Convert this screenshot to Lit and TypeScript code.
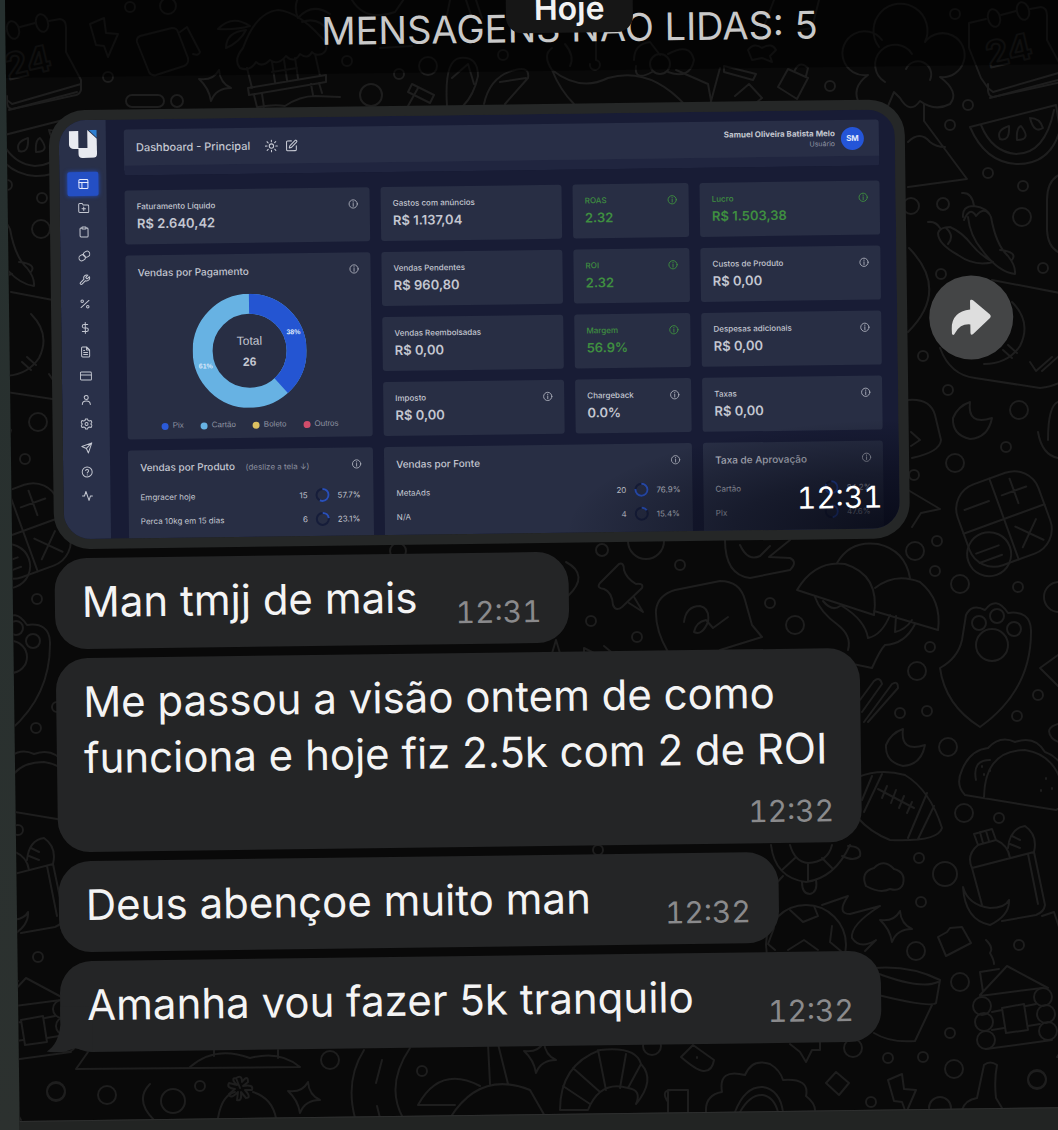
import { LitElement, html, css, svg } from 'lit';
import { customElement, property } from 'lit/decorators.js';
import { classMap } from 'lit/directives/class-map.js';

const strokeIcons: Record<string, unknown> = {
  layout: svg`<rect x="3" y="3" width="18" height="18" rx="2"/><path d="M3 9h18M9 9v12"/>`,
  folder: svg`<path d="M22 19a2 2 0 0 1-2 2H4a2 2 0 0 1-2-2V5a2 2 0 0 1 2-2h5l2 3h9a2 2 0 0 1 2 2zM12 10v7M8.500 13.500h7"/>`,
  clipboard: svg`<path d="M16 4h2a2 2 0 0 1 2 2v14a2 2 0 0 1-2 2H6a2 2 0 0 1-2-2V6a2 2 0 0 1 2-2h2"/><rect x="8" y="2" width="8" height="4" rx="1"/>`,
  link: svg`<rect x="1" y="10" width="13" height="11" rx="5.500" transform="rotate(-30 7.500 15.500)"/><rect x="10" y="3" width="13" height="11" rx="5.500" transform="rotate(-30 16.500 8.500)"/>`,
  wrench: svg`<path d="M14.700 6.300a1 1 0 0 0 0 1.400l1.600 1.600a1 1 0 0 0 1.400 0l3.800-3.800a6 6 0 0 1-7.900 7.900l-6.900 6.900a2.100 2.100 0 0 1-3-3l6.900-6.900a6 6 0 0 1 7.900-7.900z"/>`,
  percent: svg`<path d="M20 5L4 19"/><circle cx="6.500" cy="6.500" r="2.500"/><circle cx="17.500" cy="17.500" r="2.500"/>`,
  dollar: svg`<path d="M12 1v22M17 5H9.500a3.500 3.500 0 0 0 0 7h5a3.500 3.500 0 0 1 0 7H6"/>`,
  file: svg`<path d="M14 2H6a2 2 0 0 0-2 2v16a2 2 0 0 0 2 2h12a2 2 0 0 0 2-2V8zM14 2v6h6M16 13H8M16 17H8M10 9H8"/>`,
  card: svg`<rect x="1" y="4" width="22" height="16" rx="2"/><path d="M1 10h22"/>`,
  user: svg`<path d="M20 21c0-5-3-7-8-7s-8 2-8 7"/><circle cx="12" cy="7" r="4"/>`,
  settings: svg`<circle cx="12" cy="12" r="3"/><path d="M10 2h4l1 3 3 1 3-1 2 4-2 2v2l2 2-2 4-3-1-3 1-1 3h-4l-1-3-3-1-3 1-2-4 2-2v-2L1 9l2-4 3 1 3-1z"/>`,
  send: svg`<path d="M22 2L11 13M22 2l-7 20-4-9-9-4z"/>`,
  help: svg`<circle cx="12" cy="12" r="10"/><path d="M9 9a3 3 0 0 1 5.800 1c0 2-2.800 2.500-2.800 4M12 17.500v.5"/>`,
  activity: svg`<path d="M22 12h-4l-3 9L9 3l-3 9H2"/>`,
  info: svg`<circle cx="12" cy="12" r="9"/><path d="M12 11v6M12 7v1"/>`,
  sun: svg`<circle cx="12" cy="12" r="4"/><path d="M12 1v3M12 20v3M4 4l2 2M18 18l2 2M1 12h3M20 12h3M4 20l2-2M18 6l2-2"/>`,
  edit: svg`<path d="M12 3H5a2 2 0 0 0-2 2v14a2 2 0 0 0 2 2h14a2 2 0 0 0 2-2v-7"/><path d="M18.500 2.500a2.100 2.100 0 0 1 3 3L12 15l-4 1 1-4z"/>`,
};

const icon = (name: string) => html`
  <svg class="icon" viewBox="0 0 24 24" aria-hidden="true">${strokeIcons[name]}</svg>
`;

const navItems = [
  ['layout', 'Dashboard'],
  ['folder', 'Projetos'],
  ['clipboard', 'Relatórios'],
  ['link', 'Links'],
  ['wrench', 'Ferramentas'],
  ['percent', 'Taxas'],
  ['dollar', 'Despesas'],
  ['file', 'Documentos'],
  ['card', 'Assinatura'],
  ['user', 'Conta'],
  ['settings', 'Configurações'],
  ['send', 'Notificações'],
  ['help', 'Ajuda'],
  ['activity', 'Atividade'],
];

interface Metric {
  label: string;
  value: string;
  info?: boolean;
  good?: boolean;
}

// one array per grid row, first entry sits in the second column
const metricRows: Metric[][] = [
  [
    { label: 'Gastos com anúncios', value: 'R$ 1.137,04' },
    { label: 'ROAS', value: '2.32', info: true, good: true },
    { label: 'Lucro', value: 'R$ 1.503,38', info: true, good: true },
  ],
  [
    { label: 'Vendas Pendentes', value: 'R$ 960,80' },
    { label: 'ROI', value: '2.32', info: true, good: true },
    { label: 'Custos de Produto', value: 'R$ 0,00', info: true },
  ],
  [
    { label: 'Vendas Reembolsadas', value: 'R$ 0,00' },
    { label: 'Margem', value: '56.9%', info: true, good: true },
    { label: 'Despesas adicionais', value: 'R$ 0,00', info: true },
  ],
  [
    { label: 'Imposto', value: 'R$ 0,00', info: true },
    { label: 'Chargeback', value: '0.0%', info: true },
    { label: 'Taxas', value: 'R$ 0,00', info: true },
  ],
];

interface Share {
  name: string;
  count?: number;
  percent: number;
}

const products: Share[] = [
  { name: 'Emgracer hoje', count: 15, percent: 57.7 },
  { name: 'Perca 10kg em 15 dias', count: 6, percent: 23.1 },
];

const sources: Share[] = [
  { name: 'MetaAds', count: 20, percent: 76.9 },
  { name: 'N/A', count: 4, percent: 15.4 },
];

const approvals: Share[] = [
  { name: 'Cartão', percent: 84.2 },
  { name: 'Pix', percent: 47.6 },
];

@customElement('sales-dashboard')
export class SalesDashboard extends LitElement {
  static styles = css`
    :host {
      display: flex;
      height: 100%;
      overflow: hidden;
      background: #181c35;
      color: #c4c7d1;
      font-family: Inter, 'Liberation Sans', sans-serif;
      font-size: 8px;
      line-height: 12px;
    }

    button {
      display: flex;
      align-items: center;
      justify-content: center;
      padding: 0;
      border: 0;
      background: none;
      color: inherit;
    }

    .icon {
      width: 12px;
      height: 12px;
      fill: none;
      stroke: currentColor;
      stroke-width: 2;
      stroke-linecap: round;
      stroke-linejoin: round;
    }

    .sidebar {
      display: flex;
      flex-direction: column;
      align-items: center;
      flex: none;
      width: 47px;
      padding-top: 10px;
      background: #293049;
    }

    .logo {
      width: 28px;
      height: 28px;
      margin-bottom: 14px;
    }

    .nav button {
      width: 31px;
      height: 24px;
    }

    .nav button.active {
      border-radius: 2px;
      background: #244fc4;
      box-shadow: 0 0 4px #244fc4;
      color: #e6ebff;
    }

    .content {
      flex: 1;
      min-width: 0;
      padding: 10px 16px 0 18px;
    }

    .header {
      display: flex;
      align-items: center;
      gap: 15px;
      height: 36px;
      padding: 0 15px 0 12px;
      border-bottom: 10px solid #20253f;
      border-radius: 3px;
      background: #282e46;
    }

    .header h1 {
      margin: 0;
      font-size: 11px;
      font-weight: 500;
    }

    .header button .icon {
      width: 13px;
      height: 13px;
    }

    .tools {
      display: flex;
      gap: 7px;
      flex: 1;
    }

    .user {
      line-height: 10px;
      text-align: right;
    }

    .user strong {
      display: block;
      font-weight: 700;
    }

    .user span {
      color: #8f93a3;
      font-size: 7px;
    }

    .avatar {
      width: 23px;
      height: 23px;
      margin-left: -9px;
      border-radius: 50%;
      background: #2455d8;
      color: #dfe6fb;
      font-size: 8px;
      font-weight: 700;
      line-height: 23px;
      text-align: center;
    }

    .grid {
      display: grid;
      grid-template-columns: 245fr 181fr 116fr 180fr;
      grid-auto-rows: 54px;
      gap: 11px;
      margin-top: 15px;
    }

    .card {
      position: relative;
      box-sizing: border-box;
      min-width: 0;
      padding: 10px 12px 0;
      border-radius: 3px;
      background: #282e44;
    }

    .card .info {
      position: absolute;
      top: 11px;
      right: 11px;
      color: #a9adb9;
    }

    .info .icon {
      width: 11px;
      height: 11px;
    }

    .card.good,
    .good .info {
      color: #3f8f40;
    }

    .label {
      font-weight: 500;
    }

    .value {
      font-size: 13px;
      font-weight: 600;
      line-height: 22px;
    }

    .first {
      grid-column: 1;
    }

    .chart {
      grid-column: 1;
      grid-row: 2 / span 3;
      display: flex;
      flex-direction: column;
      align-items: center;
    }

    .list {
      grid-row: 5 / span 2;
    }

    .sources {
      grid-column: 2 / span 2;
    }

    h2 {
      align-self: flex-start;
      margin: 0;
      font-size: 10px;
      font-weight: 500;
      line-height: 14px;
    }

    h2 small {
      margin-left: 8px;
      color: #8b8f9f;
      font-size: 8px;
      font-weight: 400;
    }

    .donut {
      flex: none;
      width: 114px;
      height: 114px;
      margin-top: 16px;
    }

    .donut text {
      fill: #c4c7d1;
      font-family: 'Liberation Sans', sans-serif;
      font-size: 12px;
      text-anchor: middle;
    }

    .donut .total {
      font-weight: 700;
    }

    .donut .slice {
      fill: #dce8fa;
      font-size: 7px;
      font-weight: 700;
    }

    .legend {
      display: flex;
      gap: 17px;
      margin: 11px 0 0;
      padding: 0;
      color: #8e92a1;
      font-family: 'Liberation Sans', sans-serif;
      list-style: none;
    }

    .legend li {
      display: flex;
      align-items: center;
      gap: 4px;
    }

    .dot {
      width: 7px;
      height: 7px;
      border-radius: 50%;
    }

    .pix {
      background: #2b5ad8;
    }

    .cartao {
      background: #67b2e3;
    }

    .boleto {
      background: #dcc061;
    }

    .outros {
      background: #d04d6b;
    }

    table {
      width: 100%;
      margin-top: 10px;
      border-collapse: collapse;
    }

    td {
      height: 24px;
      padding: 0;
    }

    .count {
      text-align: right;
    }

    .ring-cell {
      width: 30px;
      text-align: center;
    }

    .percent {
      width: 24px;
    }

    .ring {
      display: block;
      width: 16px;
      height: 16px;
      margin: 0 auto;
      fill: none;
      stroke-width: 2;
    }
  `;

  private infoButton(label: string) {
    return html`<button class="info" aria-label="Sobre ${label}">${icon('info')}</button>`;
  }

  private metric(m: Metric, first = false) {
    return html`
      <div class=${classMap({ card: true, good: !!m.good, first })}>
        <div class="label">${m.label}</div>
        <div class="value">${m.value}</div>
        ${m.info ? this.infoButton(m.label) : ''}
      </div>
    `;
  }

  private shares(rows: Share[]) {
    return html`
      <table>
        ${rows.map(
          (row) => html`
            <tr>
              <td>${row.name}</td>
              <td class="count">${row.count ?? ''}</td>
              <td class="ring-cell">
                <svg class="ring" viewBox="0 0 16 16" aria-hidden="true">
                  <circle cx="8" cy="8" r="6" stroke="#161d3a" />
                  <circle cx="8" cy="8" r="6" stroke="#2a50b8" pathLength="100"
                    stroke-dasharray="${row.percent} 100" transform="rotate(-90 8 8)" />
                </svg>
              </td>
              <td class="percent">${row.percent}%</td>
            </tr>
          `
        )}
      </table>
    `;
  }

  render() {
    return html`
      <aside class="sidebar">
        <svg class="logo" viewBox="0 0 28 28" aria-hidden="true">
          <path fill="#e8eaf0" d="M0 1H9.500V18H18.500V0L28 9V24a4 4 0 0 1-4 4H13.500a4 4 0 0 1-4-4V19H5a5 5 0 0 1-5-5Z" />
          <path fill="#2f7fd0" d="M20 0H28V8Z" />
        </svg>
        <nav class="nav">
          ${navItems.map(
            ([name, label], i) => html`
              <button class=${classMap({ active: i === 0 })} aria-label=${label}>${icon(name)}</button>
            `
          )}
        </nav>
      </aside>
      <div class="content">
        <header class="header">
          <h1>Dashboard - Principal</h1>
          <div class="tools">
            <button aria-label="Tema claro">${icon('sun')}</button>
            <button aria-label="Editar">${icon('edit')}</button>
          </div>
          <div class="user">
            <strong>Samuel Oliveira Batista Melo</strong>
            <span>Usuário</span>
          </div>
          <div class="avatar">SM</div>
        </header>
        <div class="grid">
          ${this.metric({ label: 'Faturamento Líquido', value: 'R$ 2.640,42', info: true }, true)}
          <section class="card chart">
            <h2>Vendas por Pagamento</h2>
            ${this.infoButton('Vendas por Pagamento')}
            <svg class="donut" viewBox="0 0 114 114">
              <g fill="none" stroke-width="20" transform="rotate(-90 57 57)">
                <circle cx="57" cy="57" r="47" stroke="#67b2e3" />
                <circle cx="57" cy="57" r="47" stroke="#2455d2" pathLength="100" stroke-dasharray="38.5 100" />
              </g>
              <text x="57" y="51">Total</text>
              <text class="total" x="57" y="72">26</text>
              <text class="slice" x="101" y="41">38%</text>
              <text class="slice" x="13" y="74">61%</text>
            </svg>
            <ul class="legend">
              <li><span class="dot pix"></span>Pix</li>
              <li><span class="dot cartao"></span>Cartão</li>
              <li><span class="dot boleto"></span>Boleto</li>
              <li><span class="dot outros"></span>Outros</li>
            </ul>
          </section>
          ${metricRows.map((row) => row.map((m) => this.metric(m)))}
          <section class="card list first">
            <h2>Vendas por Produto <small>(deslize a tela ↓)</small></h2>
            ${this.infoButton('Vendas por Produto')} ${this.shares(products)}
          </section>
          <section class="card list sources">
            <h2>Vendas por Fonte</h2>
            ${this.infoButton('Vendas por Fonte')} ${this.shares(sources)}
          </section>
          <section class="card list">
            <h2>Taxa de Aprovação</h2>
            ${this.infoButton('Taxa de Aprovação')} ${this.shares(approvals)}
          </section>
        </div>
      </div>
    `;
  }
}

@customElement('chat-bubble')
export class ChatBubble extends LitElement {
  static styles = css`
    :host {
      display: block;
    }

    .bubble {
      position: relative;
      display: flex;
      align-items: flex-end;
      gap: 38px;
      width: fit-content;
      box-sizing: border-box;
      padding: 16px 28px 17px 27px;
      border-radius: 32px;
      background: #242526;
    }

    .bubble.roomy {
      gap: 74px;
    }

    .bubble.stacked {
      flex-direction: column;
      gap: 17px;
    }

    .bubble.stacked .text {
      padding-right: 6px;
    }

    .text {
      position: relative;
      z-index: 1;
      margin: 0 0 2px;
      color: #f4f4f4;
      font-size: 42px;
      line-height: 56px;
      white-space: pre-line;
    }

    time {
      color: #8a8a8c;
      font-size: 30px;
      font-variant-numeric: tabular-nums;
      line-height: 30px;
    }

    .tail {
      position: absolute;
      left: -14px;
      bottom: 0;
      width: 46px;
      height: 46px;
      fill: #242526;
    }
  `;

  @property() text = '';
  @property() time = '';
  @property() layout = '';
  @property({ type: Boolean }) tail = false;

  render() {
    return html`
      <div class=${classMap({ bubble: true, roomy: this.layout === 'roomy', stacked: this.layout === 'stacked' })}>
        ${this.tail
          ? html`<svg class="tail" viewBox="0 0 46 46"><path d="M14 0V18Q12 38 0 45Q14 48 28 42L46 46V0Z" /></svg>`
          : ''}
        <p class="text">${this.text}</p>
        <time>${this.time}</time>
      </div>
    `;
  }
}

// x, y, radius
const rings = [
  [130, 7, 5], [168, 6, 8], [108, 77, 5], [177, 101, 6], [347, 61, 5], [371, 95, 11], [399, 74, 5],
  [428, 66, 9], [503, 55, 5], [830, 86, 5], [955, 14, 5], [968, 105, 5], [950, 125, 5], [988, 173, 5],
  [1023, 186, 5], [943, 204, 6], [1022, 217, 9], [1043, 268, 5], [941, 274, 5], [911, 206, 8],
  [923, 356, 5], [948, 390, 5], [1019, 410, 9], [1006, 447, 5], [955, 463, 9], [914, 475, 5],
  [915, 551, 9], [937, 541, 5], [935, 571, 5], [960, 584, 9], [1018, 587, 5], [770, 603, 5],
  [795, 625, 9], [680, 565, 5], [591, 621, 5], [637, 637, 5], [930, 647, 5], [917, 671, 9],
  [900, 713, 5], [927, 711, 5], [1038, 695, 5], [1017, 716, 5], [948, 747, 9], [964, 813, 9],
  [999, 818, 5], [919, 858, 5], [945, 874, 12], [921, 902, 5], [916, 951, 9], [1019, 945, 5],
  [960, 982, 9], [950, 1033, 5], [853, 1048, 9], [888, 1058, 5], [923, 1057, 5], [954, 1069, 9],
  [1037, 1079, 9], [871, 1102, 5], [940, 1108, 11], [652, 1046, 9], [56, 1092, 9], [107, 1095, 9],
  [173, 1101, 12], [200, 1086, 5], [330, 1060, 9], [422, 1071, 5], [398, 551, 8], [602, 550, 6],
  [646, 541, 18], [598, 850, 5], [1059, 597, 15],
];

const doodles = svg`
  <defs>
    <path id="spark" d="M-16-7Q-2-5 4-16Q5-3 16 2Q1 2-4 15Q-6 2-16-7Z"/>
    <path id="moon" d="M-2-18Q-5 6 20-2Q16 18-2 19Q-20 15-19-2Q-14-14-2-18Z"/>
    <path id="bolt" d="M-14-12L0-18 2-3 14-2 4 21 0 10-8 9Z"/>
    <g id="pattern">
      ${rings.map(([x, y, r]) => svg`<circle cx=${x} cy=${y} r=${r} />`)}
      <ellipse cx="13" cy="30" rx="6" ry="9" transform="rotate(-15 13 30)"/>
      <ellipse cx="42" cy="23" rx="6" ry="9" transform="rotate(-15 42 23)"/>
      <path d="M20 27L35 23M49 21L60 19Q66 20 66 27V52L81 80V90Q80 94 76 95L12 109Q8 109 7 103V96M7 100L12 104 81 84M-12 35L5 31M-12 35V60L0 90 7 100"/>
      <text class="day" x="8" y="80" transform="rotate(-13 8 80)">24</text>
      <use href="#bolt" x="104" y="36"/>
      <path d="M137 42Q136 38 140 36L172 28Q177 28 178 32L188 58Q189 64 184 66L156 75Q151 76 149 72ZM180 32L187 27 200 52Q199 56 193 54"/>
      <rect x="126" y="95" width="38" height="12" rx="6"/>
      <use href="#spark" x="215" y="86"/>
      <path d="M240 68Q233 60 243 48Q256 12 278 10Q298 12 320 36Q332 48 322 54Q315 56 312 52Q308 60 300 54Q294 64 286 56Q278 66 270 60Q262 68 256 62Q250 72 240 68M247 68L252 88M315 54L320 76M272 62L275 82M284 60L287 80M295 58L298 78M272 72L297 68M248 88L326 75V82L249 95ZM254 95L257 107M262 94L264 107M311 84L313 95M319 83L322 93M258 107Q275 104 285 106Q300 96 315 96L340 97"/>
      <path d="M218 29Q232 14 250 26Q236 30 218 29M226 48Q226 32 246 30Q240 42 226 48M298 18Q292 4 302-8M298 18Q312 2 330 14M302 22Q318 16 330 32"/>
      <path d="M447 106Q444 60 460 58Q478 56 478 76Q474 95 463 106M452 78L468 64 474 84M484 104Q490 76 515 70Q530 66 528 78L505 104M500 82L526 78"/>
      <path d="M408 106L418 88M412 84L434 95 430 103 408 92ZM380 48L412 46M352 0Q365 22 395 12L406-4M450 0L444 30M466 0L472 18M476 0L482 18"/>
      <path d="M552 48Q542 55 552 70Q580 92 608 78Q650 66 686 106M552 70Q560 90 574 104M565 44Q575 56 570 66M590 64A5 5 0 1 0 596 60V42M634 60Q634 44 650 42L660 55M676 70L708 84 712 106"/>
      <circle cx="660" cy="64" r="10"/>
      <path d="M652 72Q634 82 636 66M668 72Q690 80 694 60Q690 42 668 54M774 0L764 26M800 30L812 28 820-4M710 105L720 68M724 66L756 74 753 80 724 72ZM735 96L749 84 762 98 752 106M778 87L788 69 808 78 797 99ZM795 70Q800 60 808 68L806 76M748 50Q754 42 762 48Q772 42 776 50L770 56 772 62 762 58 752 60Z"/>
      <path d="M879 47A27 27 0 1 1 925 42M882 40A22 22 0 1 0 868 75M925 42A22 22 0 1 1 940 77M868 75Q850 88 860 105M940 77Q960 92 950 104Q935 112 920 101Q910 115 900 98L894 92 888 106M885 82A20 20 0 1 1 912 54M906 69A13 13 0 1 1 930 80"/>
      <path d="M970 127Q985 162 1016 164Q1050 165 1060 130L1056 105ZM981 125Q992 152 1016 154Q1045 154 1054 110M1000 139Q996 130 1009 126Q1010 142 1000 139M1017 140Q1016 128 1021 126Q1032 140 1017 140M1030 118Q1040 118 1043 128Q1034 134 1030 118"/>
      <path d="M908 187L967 179 924 121V104M908 142Q920 130 930 142Q936 147 945 147M990 98L1058 80M909 248Q950 290 908 332M992 280L1060 293"/>
      <path d="M963 217Q962 206 974 206Q988 208 991 217Q996 245 1008 256Q1016 266 1015 274Q998 272 982 250Q970 236 968 217M964 220Q970 206 976 216Q984 206 990 215M962 193Q972 192 974 206M938 233Q940 227 950 227Q962 232 972 245Q980 255 993 262Q975 267 958 255Q938 244 938 233M946 228Q955 236 948 244M928 222Q936 221 940 228M1000 250Q1018 252 1012 260"/>
      <path d="M1070 172Q1047 174 1047 200V230Q1048 254 1070 255M1012 302Q1032 322 1020 346Q1008 364 984 364M940 348Q950 375 975 378L1040 388Q1058 386 1066 378M1030 362L1036 371 1052 357M1042 371L1060 355M1003 350L1012 358M1008 345L1017 353"/>
      <use href="#moon" x="972" y="420"/>
      <use href="#moon" x="905" y="747"/>
      <path d="M908 400Q930 398 935 415L941 440Q940 452 912 458M911 432L920 440 911 446M908 490L940 509 921 513 912 527M1058 402Q1048 406 1048 440M1038 432Q1042 455 1058 458"/>
      <g transform="rotate(-20 1004 519)">
        <rect x="961" y="476" width="86" height="86" rx="26"/>
        <path d="M1004 476V562M961 519H1047M1010 496H1036M1023 483V509M970 497H996M1012 530L1034 552M1034 530L1012 552"/>
        <circle cx="978" cy="547" r="22"/>
        <path d="M966 542H990M966 552H990"/>
      </g>
      <path d="M797 590Q815 560 845 564Q880 575 874 615ZM837 563Q850 540 878 544Q905 550 910 578M875 588Q895 572 920 582Q942 600 938 630L874 611M815 597Q820 612 838 625Q852 636 848 650M823 601Q832 612 840 606M842 606Q865 620 868 638Q882 635 890 615M896 616L895 632Q905 630 912 620M853 664L872 668Q880 650 885 645Q905 644 915 624"/>
      <path d="M725 540Q725 575 750 578L790 570Q798 562 790 558L769 557 790 540M740 545Q748 562 760 556L770 546M668 652Q655 630 656 610Q658 595 675 590L720 581Q740 581 745 600L752 625 762 637 720 650M684 622Q686 606 700 606Q710 608 708 622Q702 636 694 632Q696 622 706 620L713 628 728 617"/>
      <path d="M619 564L600 583Q596 588 604 589Q612 592 613 605Q616 612 622 607L642 588Q644 583 636 584Q626 578 624 570Q624 562 619 564ZM629 603L643 612 634 597M566 562Q590 575 568 596M556 640L550 660M556 640L562 660M584 658V648L600 656M604 646L616 656"/>
      <path d="M940 668Q958 658 962 640L966 615Q972 603 985 610Q996 595 1008 613Q1030 610 1031 630Q1032 690 980 727Q945 705 940 668Z"/>
      <circle cx="979" cy="623" r="7"/>
      <circle cx="997" cy="616" r="7"/>
      <circle cx="1014" cy="629" r="7"/>
      <circle cx="992" cy="645" r="16"/>
      <path d="M1058 655L1040 668 1058 686M860 700L874 681Q880 676 882 684L862 712M864 722L892 684Q898 680 898 688L868 722M1058 724Q1044 728 1052 738Q1056 742 1060 742"/>
      <path d="M858 777Q880 768 905 775Q930 790 942 828Q938 842 890 840Q870 832 858 818M878 789L914 808M887 786L882 798M896 790L891 803M904 796L899 808M912 802L907 813M872 776L862 800M882 774L864 812M927 793L908 838M934 806L918 839"/>
      <path d="M965 795Q955 785 962 770Q970 750 988 748Q1000 735 1015 742Q1035 735 1045 752Q1068 760 1075 800L1056 810ZM984 797Q985 750 1025 750Q1060 755 1065 800M976 780Q972 760 990 760M982 766V767M990 770V771M984 774V775M1046 778V779M1041 790V791M1052 788V789"/>
      <path d="M974 834L992 829 996 840 978 845ZM980 832L983 843M986 831L989 841M978 845Q966 855 972 868L1034 852M972 868L982 905M1034 852L1045 905Q1044 912 1036 915L1002 921M1028 854L1038 904M996 840Q1008 845 1010 858M1008 848Q1010 828 1025 826Q1038 835 1034 852M1012 836L1020 840M1010 844L1020 848M963 887Q968 905 990 908Q1005 908 1009 900Q1010 915 990 925Q965 920 963 887Z"/>
      <path d="M866 886Q860 872 874 868Q884 858 894 869Q906 872 903 884Q900 892 890 889Q880 894 866 886ZM771 845Q775 878 806 882Q835 878 850 845M790 845Q795 862 808 863Q828 862 832 845M808 864V881M795 858L782 870M822 858L832 868M802 882Q802 894 810 894Q818 892 816 880M848 846Q862 846 860 856Q854 862 842 856M783 876L772 888"/>
      <circle cx="806" cy="945" r="40"/>
      <path d="M790 910L803 922 818 916 814 906M774 928L768 944 775 950M832 926L830 942 842 952M788 950L804 940 818 950M822 905L848 896Q836 914 850 914L880 906Q850 925 852 938Q860 950 876 940L865 951"/>
      <use href="#spark" x="896" y="927"/>
      <path d="M938 937L947 932 950 928 962 927 971 943 946 956ZM1042 916L1054 912 1060 930M986 940Q994 948 990 953Q994 960 994 964"/>
      <path d="M874 968Q910 965 940 980L936 1003Q930 1008 874 994M874 972Q920 990 938 982M932 1005L915 1041Q890 1043 874 1033"/>
      <path d="M980 995L1007 966 1048 988M980 972L999 969M980 972L983 992M980 996L1042 988M992 1012L1002 1010M992 1030L1004 1028M1026 1006L1036 1004M1028 1026L1040 1024M986 1049L1052 1040M1002 1008L1024 1004 1028 1030 1006 1033Z"/>
      <circle cx="982" cy="1006" r="9"/>
      <circle cx="984" cy="1022" r="9"/>
      <circle cx="986" cy="1040" r="9"/>
      <circle cx="1043" cy="997" r="9"/>
      <circle cx="1046" cy="1014" r="9"/>
      <circle cx="1048" cy="1031" r="9"/>
      <path d="M560 1110Q560 1065 600 1050Q636 1046 641 1064Q656 1080 636 1104Q642 1090 628 1088Q600 1080 588 1110ZM563 1086L590 1104M573 1068L600 1092M598 1050L606 1090M626 1054L620 1088M641 1064L628 1088M668 1112V1090H688V1112M668 1102Q660 1090 672 1090M681 1057L693 1045 714 1060Q712 1072 703 1071Q696 1070 681 1057ZM697 1057V1058"/>
      <use href="#spark" x="540" y="1058"/>
      <use href="#spark" x="304" y="1098"/>
      <use href="#bolt" x="902" y="1092"/>
      <path d="M706 1112Q705 1095 722 1092Q718 1068 745 1075Q752 1058 770 1064Q780 1070 783 1080Q810 1078 806 1096Q816 1104 815 1112M735 1112Q745 1086 763 1087Q780 1090 783 1112M740 1112Q750 1094 763 1095Q774 1097 778 1112M826 1083L836 1072 849 1083 839 1095ZM790 1044L800 1052 806 1062 812 1050 820 1050V1040M962 1110Q965 1100 977 1098L984 1065Q990 1060 997 1065Q994 1080 996 1098L1002 1108"/>
      <path d="M88 1052L76 1069 300 1067Q280 1050 250 1058Q215 1045 190 1067M214 1050V1056M278 1050V1058M150 1084Q134 1100 154 1120M218 1118Q222 1095 235 1092M253 1092Q272 1098 276 1118M364 1050Q345 1080 355 1118M410 1048Q385 1085 403 1118M382 1060L376 1083M377 1106L380 1118M418 1105Q440 1065 480 1086M418 1105H455M450 1118Q480 1070 530 1090L546 1118M488 1044L490 1084M498 1044L508 1084"/>
      <path d="M240 1088L236 1078Q242 1074 242 1082Q248 1074 248 1082L243 1086Q254 1084 252 1090L245 1090Q252 1098 246 1098L241 1092Q242 1102 237 1100L238 1092Q230 1100 229 1094L235 1089Q226 1088 229 1083L237 1085Q230 1078 236 1078"/>
    </g>
  </defs>
`;

@customElement('chat-doodles')
export class ChatDoodles extends LitElement {
  static styles = css`
    :host {
      display: block;
      overflow: hidden;
    }

    svg {
      display: block;
      width: 100%;
      height: 100%;
      fill: none;
      stroke: #1e1e1e;
      stroke-width: 2;
      stroke-linecap: round;
      stroke-linejoin: round;
    }

    .day {
      font: 700 36px Inter, sans-serif;
    }
  `;

  render() {
    // the motif repeats every 981px, drawn level with the horizon
    return html`
      <svg aria-hidden="true">
        ${doodles}
        <g transform="rotate(0.75) translate(-5 0)">
          <use href="#pattern" />
          <use href="#pattern" x="-981" y="12" />
          <use href="#pattern" x="981" y="-12" />
        </g>
      </svg>
    `;
  }
}

@customElement('app-root')
export class AppRoot extends LitElement {
  static styles = css`
    :host {
      display: block;
      height: 100vh;
      overflow: hidden;
      background: linear-gradient(#26302f, #2c312f);
      font-family: Inter, 'Liberation Sans', sans-serif;
    }

    .screen {
      position: relative;
      display: flex;
      flex-direction: column;
      min-height: calc(100vh + 24px);
      margin: 0 -75px 0 5px;
      background: #090909;
      transform: rotate(-0.75deg);
      transform-origin: 0 0;
    }

    .backdrop {
      position: absolute;
      inset: 0;
    }

    .unread {
      position: relative;
      margin: -16px 0 0;
      padding: 27px 0 19px;
      background: rgba(0, 0, 0, 0.5);
      color: #c9c9c9;
      font-size: 38px;
      line-height: 48px;
      text-align: center;
    }

    .day {
      position: absolute;
      top: -8px;
      left: 50%;
      padding: 0 28px;
      border-radius: 16px;
      background: #161616;
      color: #f2f2f2;
      font-size: 32px;
      font-weight: 600;
      line-height: 48px;
      transform: translateX(-50%);
    }

    .messages {
      position: relative;
      display: flex;
      flex: 1;
      flex-direction: column;
      gap: 9px;
      padding: 33px 42px 0;
    }

    .photo-row {
      display: flex;
      align-items: center;
      gap: 22px;
    }

    .photo {
      position: relative;
      box-sizing: border-box;
      width: 82%;
      padding: 10px;
      border-radius: 36px;
      background: #252727;
    }

    .picture {
      position: relative;
      overflow: hidden;
      aspect-ratio: 837 / 419;
      border-radius: 27px;
    }

    .picture::after {
      content: '';
      position: absolute;
      inset: 0;
      background: radial-gradient(ellipse 40% 26% at 100% 100%, rgba(6, 8, 20, 0.85), rgba(6, 8, 20, 0.5) 50%, transparent);
    }

    .photo time {
      position: absolute;
      right: 27px;
      bottom: 27px;
      color: #fff;
      font-size: 30px;
      font-variant-numeric: tabular-nums;
      line-height: 30px;
    }

    .forward {
      display: flex;
      align-items: center;
      justify-content: center;
      flex: none;
      width: 84px;
      height: 84px;
      padding: 0;
      border: 0;
      border-radius: 50%;
      background: #444546;
    }

    .forward svg {
      width: 40px;
      height: 36px;
      fill: #dedede;
    }

    .composer {
      position: relative;
      height: 32px;
      border-top: 1px solid #2e2f2f;
      background: #222423;
    }
  `;

  render() {
    return html`
      <div class="screen">
        <chat-doodles class="backdrop"></chat-doodles>
        <p class="unread">MENSAGENS NÃO LIDAS: 5</p>
        <main class="messages">
          <div class="photo-row">
            <div class="photo">
              <div class="picture"><sales-dashboard></sales-dashboard></div>
              <time>12:31</time>
            </div>
            <button class="forward" aria-label="Encaminhar">
              <svg viewBox="0 0 40 36">
                <path d="M19 2Q19 -1 22 1L38.500 15Q40.500 17 38.500 19L22 34.500Q19 37 19 33V25Q9 24 4 33Q2 37 .5 34Q-2 12 19 10Z" />
              </svg>
            </button>
          </div>
          <chat-bubble text="Man tmjj de mais" time="12:31"></chat-bubble>
          <chat-bubble
            layout="stacked"
            .text=${'Me passou a visão ontem de como\nfunciona e hoje fiz 2.5k com 2 de ROI'}
            time="12:32"
          ></chat-bubble>
          <chat-bubble layout="roomy" text="Deus abençoe muito man" time="12:32"></chat-bubble>
          <chat-bubble layout="roomy" tail text="Amanha vou fazer 5k tranquilo" time="12:32"></chat-bubble>
        </main>
        <footer class="composer"></footer>
        <div class="day">Hoje</div>
      </div>
    `;
  }
}
